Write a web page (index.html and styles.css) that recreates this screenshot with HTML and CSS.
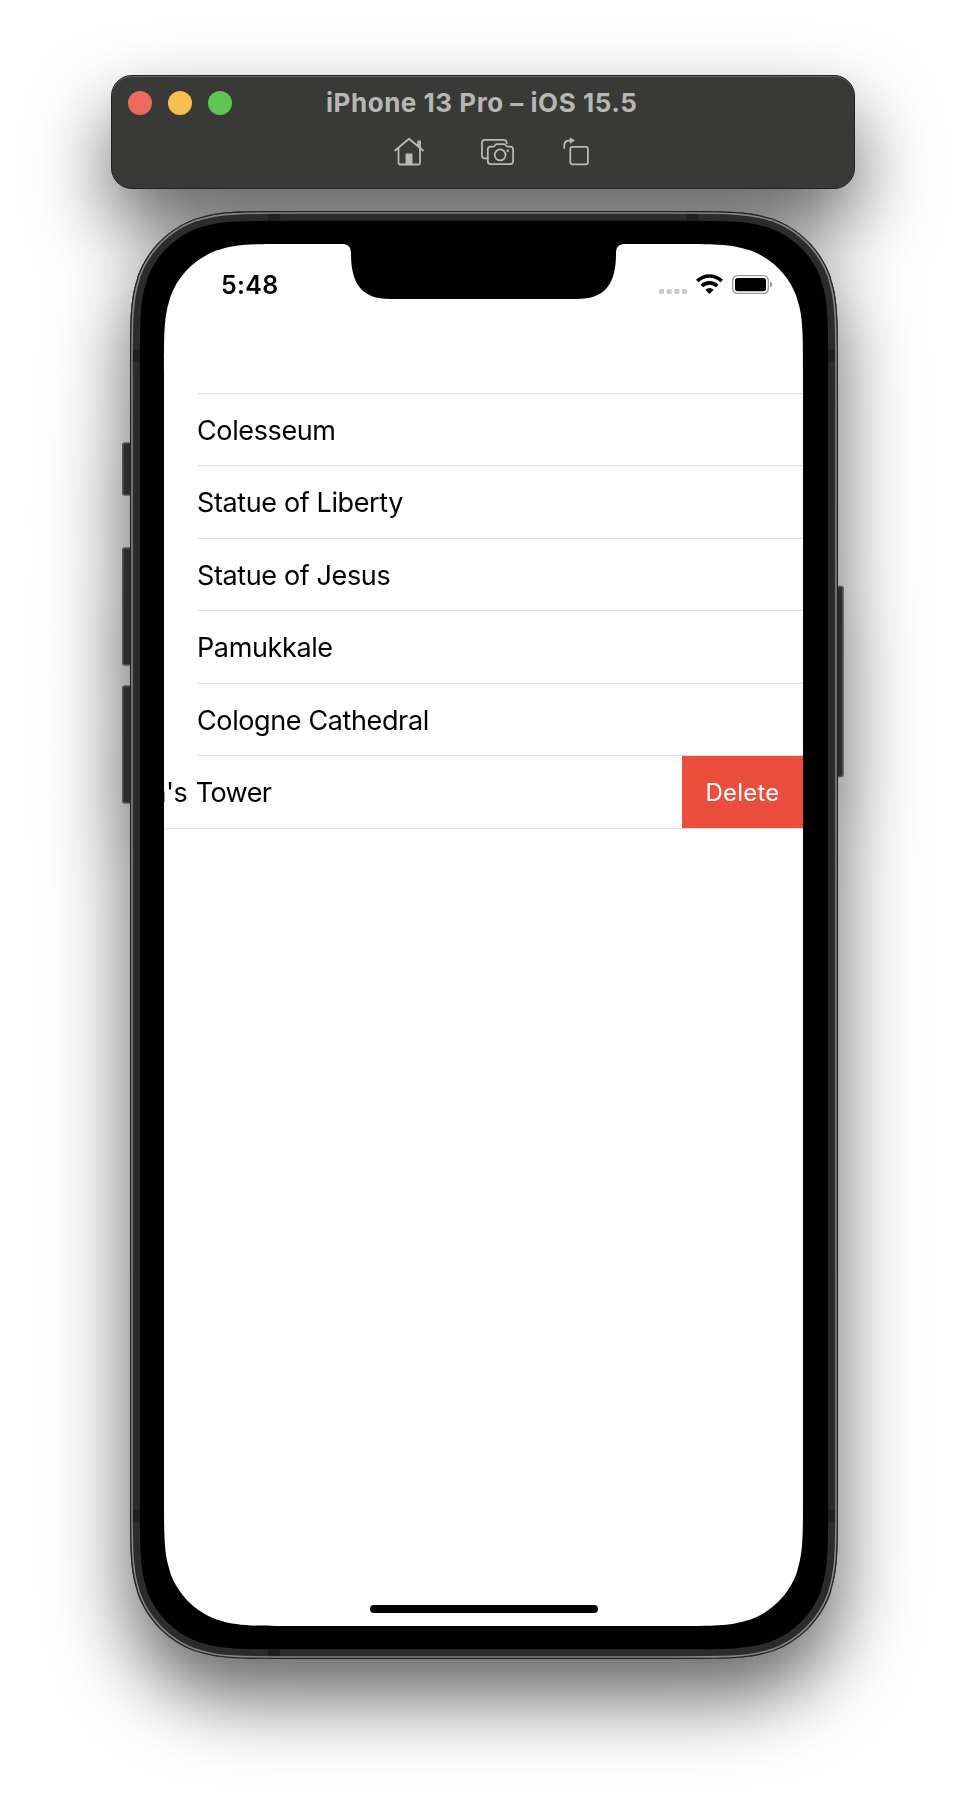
FILE: index.html
```html
<!DOCTYPE html>
<html lang="en">
<head>
<meta charset="utf-8">
<title>iPhone 13 Pro – iOS 15.5</title>
<link rel="stylesheet" href="styles.css">
</head>
<body>
<main class="simulator">
  <header class="toolbar">
    <div class="titlebar">
      <div class="lights"><i class="light close"></i><i class="light minimize"></i><i class="light zoom"></i></div>
      <h1 class="title">iPhone 13 Pro – iOS 15.5</h1>
    </div>
    <div class="tools">
      <svg class="tool" width="32" height="30" viewBox="0 0 32 30">
        <path d="M2 13.500 16 1.700 30 13.500M5.500 11.500v14.500q0 1.500 1.500 1.500h18.500q1.500 0 1.500-1.500V11.500M25.200 8.500V4.300h1.800v6"/>
        <path class="solid" d="M12.500 16.500h7V28h-7z"/>
      </svg>
      <svg class="tool" width="34" height="30" viewBox="0 0 35 30">
        <path d="M7 21.500H4q-3 0-3-3V5.500q0-3 3-3h19q3.500 0 3.500 3.500"/>
        <path d="M10 9.500h2.300q1 0 1.700-.9l1-1.100q.7-.7 1.700-.7h6.600q1 0 1.700.7l1 1.100q.7.9 1.700.9H30q3 0 3 3v12q0 3-3 3H10q-3 0-3-3v-12q0-3 3-3z"/>
        <circle cx="19.700" cy="18" r="5.600"/><circle class="solid" cx="27.500" cy="13.700" r="1.300"/>
      </svg>
      <svg class="tool" width="28" height="30" viewBox="0 0 28 30">
        <rect x="7.300" y="9.900" width="17.600" height="17.400" rx="2"/>
        <path d="M1.200 11V9q0-5.500 5.500-5.500h1"/><path class="solid" d="M6.800.3 12 3.500 6.800 6.700z"/>
      </svg>
    </div>
  </header>

  <section class="phone">
    <svg class="frame" width="726" height="1448" viewBox="-9 0 726 1448">
      <defs>
        <path id="body" d="M157.500 0H550.500C595.900 0 618.600 0 639 6.700L643 7.700C669.600 17.400 690.600 38.400 700.300 65L701.300 69C708 89.400 708 112.100 708 157.500V1290.500C708 1335.900 708 1358.600 701.300 1379L700.300 1383C690.600 1409.600 669.600 1430.600 643 1440.300L639 1441.300C618.600 1448 595.900 1448 550.500 1448H157.500C112.100 1448 89.400 1448 69 1441.300L65 1440.300C38.400 1430.600 17.400 1409.600 7.700 1383L6.700 1379C0 1358.600 0 1335.900 0 1290.500V157.500C0 112.100 0 89.400 6.700 69L7.700 65C17.400 38.400 38.400 17.400 65 7.700L69 6.700C89.400 0 112.100 0 157.500 0Z"/>
        <clipPath id="bodyClip"><use href="#body"/></clipPath>
      </defs>
      <g class="buttons">
        <rect x="-7.200" y="232" width="12" height="52" rx="2"/>
        <rect x="-7.200" y="337" width="12" height="117" rx="2"/>
        <rect x="-7.200" y="475" width="12" height="117" rx="2"/>
        <rect x="702" y="375.500" width="11" height="190" rx="2"/>
      </g>
      <g clip-path="url(#bodyClip)">
        <use href="#body" fill="#000"/>
        <use href="#body" fill="none" stroke="#2c2c2c" stroke-width="19.600"/>
        <g fill="#1f1f1f">
          <rect x="138" y="0" width="12" height="9.800"/><rect x="557" y="0" width="12" height="9.800"/>
          <rect x="138" y="1438.200" width="12" height="10"/>
          <rect x="0" y="138" width="9.800" height="12"/><rect x="698.200" y="138" width="10" height="12"/>
          <rect x="0" y="1298" width="9.800" height="12"/><rect x="698.200" y="1298" width="10" height="12"/>
        </g>
        <use href="#body" fill="none" stroke="#858585" stroke-width="5.600"/>
        <use href="#body" fill="none" stroke="#222" stroke-width="2.400"/>
      </g>
      <path fill="#fff" transform="translate(34 33)" d="M128.400 0H177C184.500 0 187 2.500 187 10C187 40 198 55 226 55H413C441 55 452 40 452 10C452 2.500 454.500 0 462 0H510.600C547.600 0 566.100 0 582.700 5.500L586 6.300C607.700 14.200 624.800 31.300 632.700 53L633.500 56.300C639 72.900 639 91.400 639 128.400V1253.600C639 1290.600 639 1309.100 633.500 1325.700L632.700 1329C624.800 1350.700 607.700 1367.800 586 1375.700L582.700 1376.500C566.100 1382 547.600 1382 510.600 1382H128.400C91.400 1382 72.900 1382 56.300 1376.500L53 1375.700C31.300 1367.800 14.200 1350.700 6.300 1329L5.500 1325.700C0 1309.100 0 1290.600 0 1253.600V128.400C0 91.400 0 72.900 5.500 56.300L6.300 53C14.200 31.300 31.300 14.200 53 6.300L56.300 5.500C72.900 0 91.400 0 128.400 0Z"/>
    </svg>
    <div class="screen">
      <div class="status">
        <time class="clock">5:48</time>
        <svg width="116" height="24" viewBox="0 0 116 24">
          <g fill="#cbcbcb"><rect x="0" y="16" width="5" height="5" rx="1.300"/><rect x="7.700" y="16" width="5" height="5" rx="1.300"/><rect x="15.400" y="16" width="5" height="5" rx="1.300"/><rect x="23.100" y="16" width="5" height="5" rx="1.300"/></g>
          <g fill="none" stroke="#000" stroke-width="3.600"><path d="M38.300 8.100a17 17 0 0 1 24.400 0"/><path d="M42.800 13a11 11 0 0 1 15.400 0"/></g>
          <path d="M46.300 16.800q4.200-3.400 8.400 0L50.500 21z"/>
          <rect x="73.700" y="2.600" width="35.600" height="17.800" rx="5" fill="none" stroke="#999" stroke-width="1.400"/>
          <rect x="76" y="4.900" width="31" height="13.300" rx="2.600"/>
          <path d="M111 8.600q2.300.9 2.300 2.900t-2.300 2.900z" fill="#999"/>
        </svg>
      </div>
      <ul class="list">
        <li class="row">Colesseum</li>
        <li class="row">Statue of Liberty</li>
        <li class="row">Statue of Jesus</li>
        <li class="row">Pamukkale</li>
        <li class="row">Cologne Cathedral</li>
        <li class="row swiped"><span class="label">n's Tower</span><button class="delete">Delete</button></li>
      </ul>
      <div class="home"></div>
    </div>
  </section>
</main>
</body>
</html>
```
FILE: styles.css
```css
body {
  margin: 0;
  background: #fff;
  font-family: Inter, "Liberation Sans", sans-serif;
}
.simulator {
  box-sizing: border-box;
  width: 966px;
  height: 1810px;
  padding-top: 75px;
  overflow: hidden;
  filter: drop-shadow(0 38px 39px rgba(0, 0, 0, 0.61));
}
.toolbar {
  box-sizing: border-box;
  width: 744px;
  height: 114px;
  margin-left: 111px;
  border: 1px solid #222;
  border-radius: 21px;
  background: #393937;
  box-shadow: inset 0 1px 0 #666;
}
.titlebar {
  display: grid;
  grid-template-columns: 214px 1fr;
  align-items: center;
  height: 55px;
}
.lights {
  display: flex;
  gap: 16px;
  margin-top: -1px;
  padding-left: 16px;
}
.light {
  width: 24px;
  height: 24px;
  border-radius: 50%;
}
.close { background: #ed6a5e; }
.minimize { background: #f5bf4f; }
.zoom { background: #61c554; }
.title {
  margin: -1px 0 0;
  color: #b7b7b5;
  font-size: 26px;
  font-weight: 700;
  letter-spacing: 0.53px;
  line-height: 32px;
  white-space: nowrap;
}
.tools {
  display: flex;
  padding: 6px 0 0 281px;
}
.tool {
  fill: none;
  stroke: #b9b9b7;
  stroke-width: 1.8;
  stroke-linejoin: round;
  stroke-linecap: round;
}
.tool:nth-child(2) { margin-left: 56px; }
.tool:nth-child(3) { margin-left: 48px; }
.solid {
  fill: #b9b9b7;
  stroke: none;
}
.phone {
  display: grid;
  width: 708px;
  height: 1448px;
  margin: 22px 0 0 130px;
}
.frame {
  grid-area: 1 / 1;
  margin-left: -9px;
}
.buttons {
  fill: #2c2c2c;
  stroke: #555;
  stroke-width: 1.6;
}
.screen {
  grid-area: 1 / 1;
  display: flex;
  flex-direction: column;
  width: 639px;
  height: 1382px;
  margin: 33px 0 0 34px;
  overflow: hidden;
  z-index: 1;
}
.status {
  display: flex;
  justify-content: space-between;
  height: 149px;
  padding: 29px 28px 0 57px;
  box-sizing: border-box;
}
.clock {
  font-size: 25px;
  font-weight: 600;
  letter-spacing: 0.3px;
  line-height: 25px;
}
.list {
  margin: 0;
  padding: 0;
  list-style: none;
}
.row {
  box-sizing: border-box;
  height: 72.4px;
  margin-left: 33px;
  border-top: 1px solid #dfdfdf;
  font-size: 27px;
  letter-spacing: -0.38px;
  line-height: 73px;
  white-space: nowrap;
}
.swiped {
  display: flex;
  justify-content: space-between;
  height: 74px;
  margin-left: 0;
  border-top-color: transparent;
  border-bottom: 1px solid #dfdfdf;
  background: linear-gradient(#dfdfdf, #dfdfdf) 33px 0 / 606px 1px no-repeat border-box;
}
.label {
  margin-left: -13.5px;
  letter-spacing: -0.55px;
  word-spacing: 1.5px;
}
.delete {
  width: 121px;
  padding: 1px 0 0;
  border: 0;
  background: #eb4e3d;
  color: #fff;
  font: 24px/71px Inter, "Liberation Sans", sans-serif;
  letter-spacing: 0.25px;
}
.home {
  width: 228px;
  height: 8px;
  margin: auto auto 13px 206px;
  border-radius: 4px;
  background: #000;
}
```
